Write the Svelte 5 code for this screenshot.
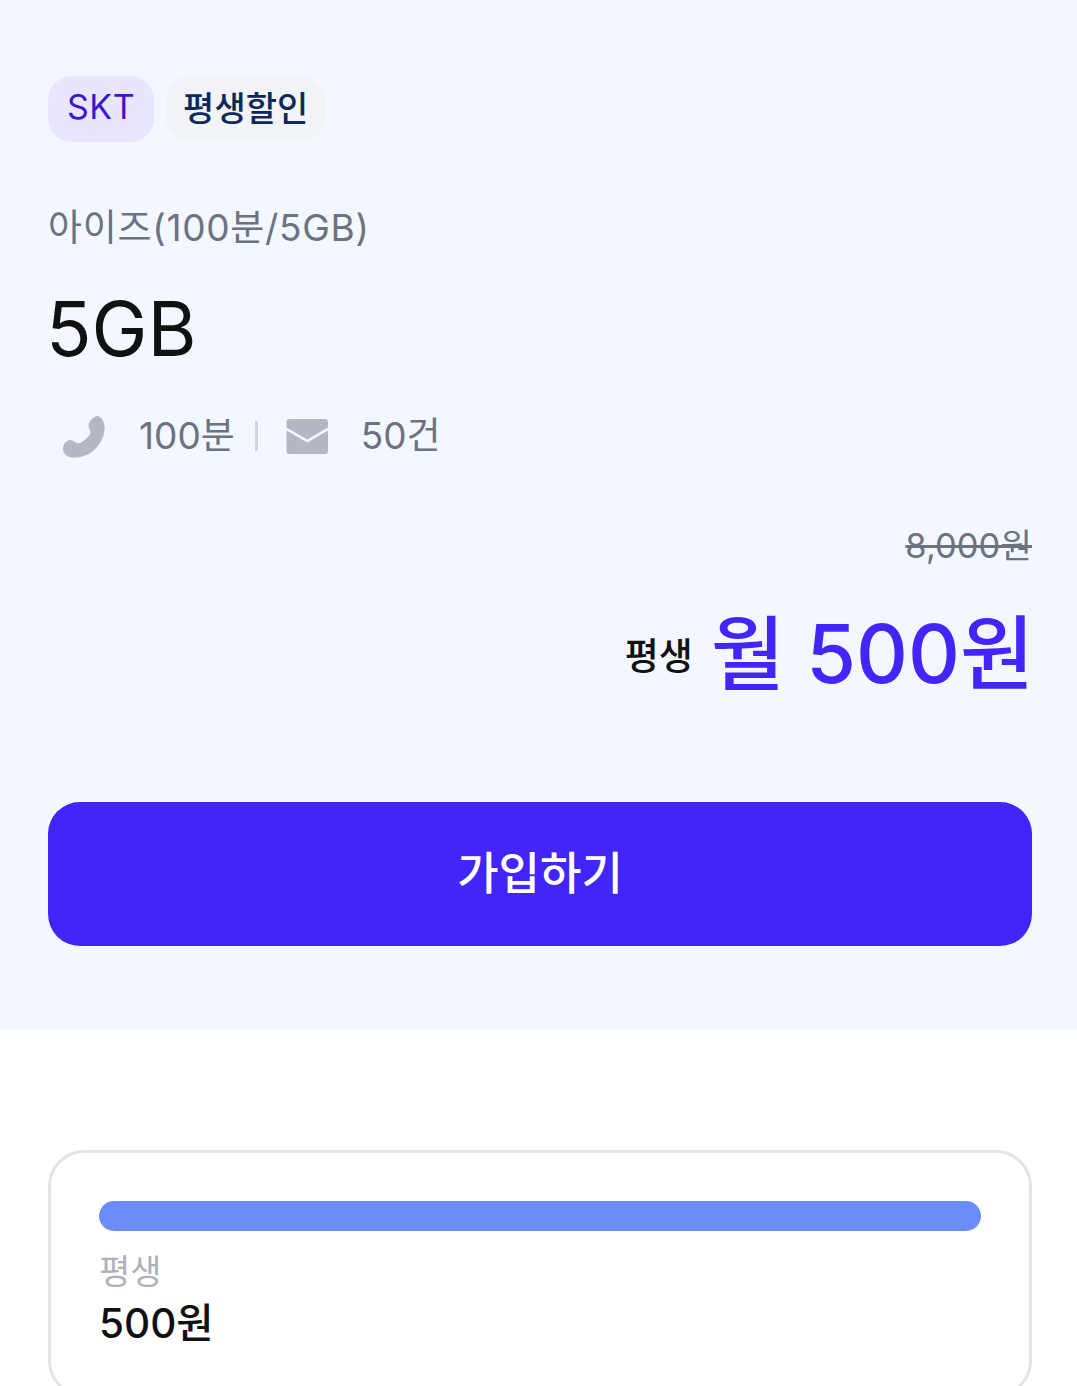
<script>
	const usage = [
		{ type: 'call', label: '100분' },
		{ type: 'mail', label: '50건' }
	];
</script>

<main class="page">
	<section class="summary">
		<div class="chips">
			<span class="chip chip--carrier">SKT</span>
			<span class="chip chip--promo">평생할인</span>
		</div>
		<p class="plan-name">아이즈(100분/5GB)</p>
		<h1 class="data">5GB</h1>
		<ul class="usage">
			{#each usage as item, i}
				{#if i > 0}<li class="divider" aria-hidden="true"></li>{/if}
				<li class="usage__item">
					{#if item.type === 'call'}
						<svg class="icon" viewBox="0 0 44 44" aria-hidden="true">
							<path d="M31 4C33.500 2 36 1 38 3C41.500 6 43 11 42.500 16C42 24 37 32 31 37C25 42 17 44 10 43.500C5 43 2 40 1 36C.5 32 3 28 6 26.500C8 25.500 10 26 12 27.500C14.500 29.500 17 30 20 28C24 25 27.500 22 28.500 19C29 17 27 15.500 26.500 13C26 9.500 28 6.500 31 4Z" />
						</svg>
					{:else}
						<svg class="icon" viewBox="0 0 44 44" aria-hidden="true">
							<path d="M5.500 5H41C43 5 44 6 44 8V13.500L23.250 25.500 2.500 13.500V8C2.500 6 3.500 5 5.500 5Z" />
							<path d="M2.500 16.500 23.250 28.500 44 16.500V37C44 39 43 40 41 40H5.500C3.500 40 2.500 39 2.500 37Z" />
						</svg>
					{/if}
					<span>{item.label}</span>
				</li>
			{/each}
		</ul>
		<div class="price">
			<del class="price__old">8,000원</del>
			<div class="price__now">
				<span class="price__term">평생</span>
				<strong class="price__value">월 500원</strong>
			</div>
		</div>
		<button class="join">가입하기</button>
	</section>

	<section class="schedule">
		<div class="schedule__card">
			<div class="bar"></div>
			<p class="schedule__term">평생</p>
			<p class="schedule__price">500원</p>
		</div>
	</section>
</main>

<style>
	:global(body) {
		background: #fff;
	}

	.page {
		height: 1386px;
		overflow: hidden;
		font-family: Inter, 'Noto Sans CJK KR', sans-serif;
	}

	.summary {
		box-sizing: border-box;
		height: 1030px;
		padding: 76px 45px 0 48px;
		background: #f3f7ff;
	}

	.chips {
		display: flex;
		gap: 12px;
	}

	.chip {
		display: flex;
		align-items: center;
		box-sizing: border-box;
		height: 66px;
		padding: 0 17px 5px;
		border-radius: 24px;
		font-size: 34px;
		white-space: nowrap;
	}

	.chip--carrier {
		padding-inline: 19px;
		background: #e9e5ff;
		color: #3a18c8;
		letter-spacing: 0.5px;
	}

	.chip--promo {
		background: #f1f3f7;
		color: #0b2a5b;
		font-weight: 500;
	}

	.plan-name {
		margin: 62px 0 0;
		color: #6b7280;
		font-size: 37px;
		line-height: 48px;
		letter-spacing: 0.7px;
	}

	.data {
		margin: 33px 0 0 -2px;
		color: #111;
		font-size: 75px;
		font-weight: 400;
		line-height: 88px;
	}

	.usage {
		display: flex;
		align-items: center;
		margin: 39px 0 0;
		padding: 0 0 0 14px;
		list-style: none;
		color: #6b7280;
		font-size: 37px;
		line-height: 48px;
	}

	.usage__item {
		display: flex;
		align-items: center;
		gap: 33px;
	}

	.icon {
		display: block;
		width: 44px;
		height: 44px;
		fill: #b4b8c2;
	}

	.divider {
		width: 3px;
		height: 30px;
		margin: 0 26px 0 20px;
		background: #d1d5db;
	}

	.price {
		display: flex;
		flex-direction: column;
		align-items: flex-end;
		margin-top: 64px;
	}

	.price__old {
		color: #6b7280;
		font-size: 34.500px;
		line-height: 44px;
	}

	.price__now {
		display: flex;
		align-items: center;
		gap: 18px;
		margin-top: 38px;
		margin-right: -2px;
	}

	.price__term {
		color: #111;
		font-size: 37px;
		font-weight: 500;
	}

	.price__value {
		color: #4225f8;
		font-size: 80.500px;
		font-weight: 500;
		line-height: 96px;
	}

	.join {
		display: block;
		width: 984px;
		height: 144px;
		margin-top: 100px;
		padding: 0 0 8px;
		border: 0;
		border-radius: 32px;
		background: #4225f8;
		color: #fff;
		font: inherit;
		font-size: 45px;
		font-weight: 500;
	}

	.schedule {
		padding: 120px 45px 0 48px;
	}

	.schedule__card {
		box-sizing: border-box;
		width: 984px;
		height: 247px;
		padding: 48px 48px 0;
		border: 3px solid #e3e4e8;
		border-radius: 36px;
	}

	.bar {
		height: 30px;
		border-radius: 15px;
		background: #6c8cfb;
	}

	.schedule__term {
		margin: 19px 0 0;
		color: #adb1ba;
		font-size: 34px;
		line-height: 44px;
	}

	.schedule__price {
		margin: 4px 0 0;
		color: #111;
		font-size: 40.500px;
		font-weight: 500;
		line-height: 52px;
	}
</style>
